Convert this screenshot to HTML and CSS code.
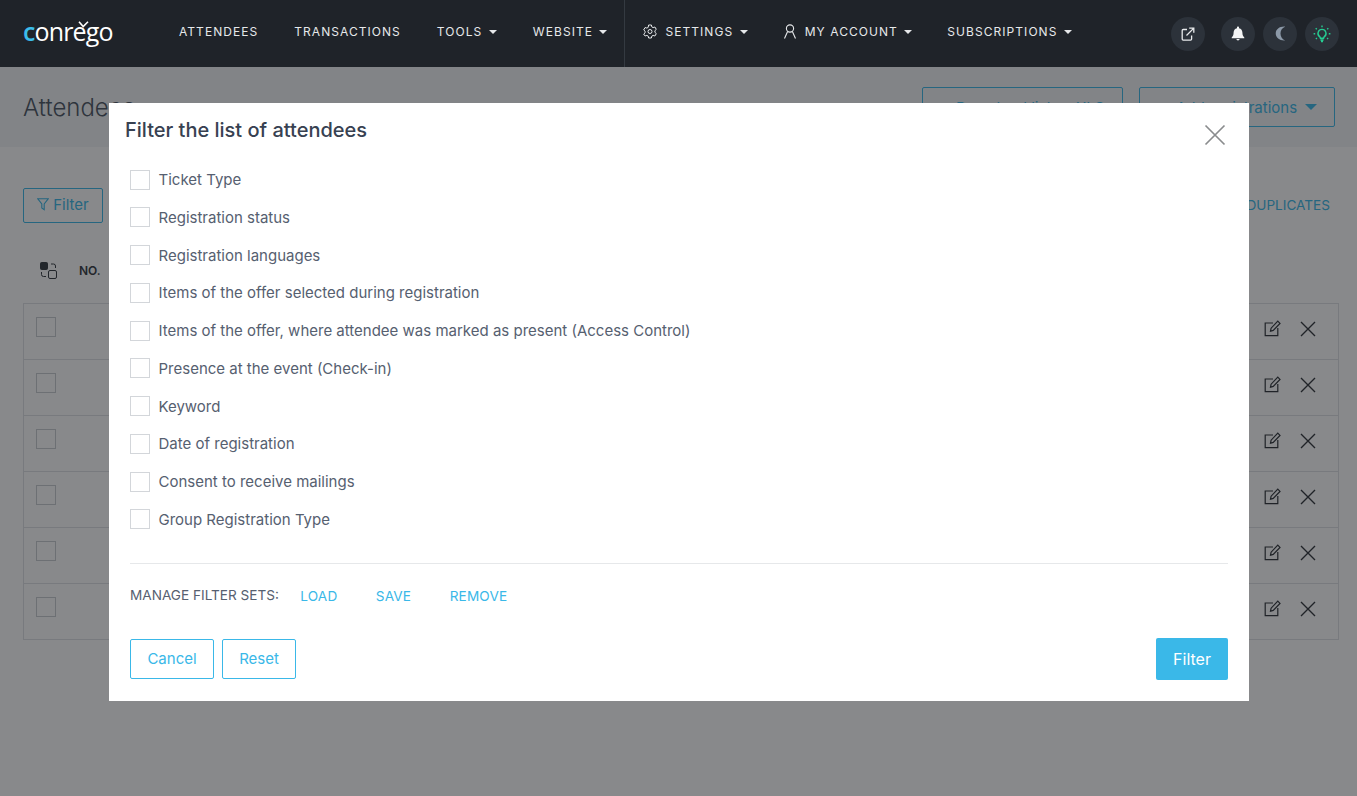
FILE: index.html
```html
<!DOCTYPE html>
<html lang="en">
<head>
<meta charset="utf-8">
<title>Attendees</title>
<link rel="stylesheet" href="styles.css">
</head>
<body>
<header class="topbar">
  <a class="logo"><span class="logo-c">c</span>onrego<svg class="logo-tick" width="11" height="7" viewBox="0 0 11 7"><path d="M1 .8l4.200 4.700L10 .8" fill="none" stroke="#fff" stroke-width="1.600"/></svg></a>
  <nav class="nav nav-main">
    <a class="nav-link">ATTENDEES</a>
    <a class="nav-link">TRANSACTIONS</a>
    <a class="nav-link caret">TOOLS</a>
    <a class="nav-link caret">WEBSITE</a>
  </nav>
  <nav class="nav nav-second">
    <a class="nav-link caret"><svg class="nav-icon" width="14" height="15" viewBox="0 0 14 15" fill="none" stroke="#e6e8ea" stroke-width="1"><circle cx="7" cy="7.500" r="2"/><path d="M5.600 1h2.800l.4 1.900 1.300.7 1.800-.6 1.400 2.400-1.400 1.300v1.600l1.400 1.300-1.400 2.400-1.800-.6-1.300.7-.4 1.900H5.600l-.4-1.900-1.300-.7-1.800.6L.7 10.100l1.400-1.300V7.200L.7 5.900l1.400-2.400 1.800.6 1.300-.7z"/></svg>SETTINGS</a>
    <a class="nav-link caret"><svg class="nav-icon" width="14" height="15" viewBox="0 0 14 15" fill="none" stroke="#e6e8ea" stroke-width="1.100"><circle cx="7" cy="4.500" r="3.600"/><path d="M4.600 7.500 1.500 14.500M9.400 7.500l3.100 7"/></svg>MY ACCOUNT</a>
    <a class="nav-link caret">SUBSCRIPTIONS</a>
  </nav>
  <div class="round-group">
    <a class="round round-ext"><svg width="14" height="14" viewBox="0 0 14 14" fill="none" stroke="#e8eaec" stroke-width="1.300"><path d="M6 2.500H2.200a1 1 0 0 0-1 1v8.600a1 1 0 0 0 1 1h7.400a1 1 0 0 0 1-1V8.500"/><path d="M5.500 8.500 12.600 1.400M8.200 1.200h4.600v4.600"/></svg></a>
    <a class="round"><svg width="14" height="15" viewBox="0 0 14 15" fill="#f4f5f6"><path d="M7 .6c.6 0 1 .4 1 1v.6c2.200.5 3.400 2.300 3.400 4.400 0 2.700.7 3.600 1.900 4.900v.7H.7v-.7c1.200-1.300 1.900-2.200 1.900-4.900 0-2.100 1.200-3.900 3.400-4.400v-.6c0-.6.4-1 1-1z"/><path d="M5.400 13h3.200a1.600 1.400 0 0 1-3.200 0z"/></svg></a>
    <a class="round"><svg width="11" height="15" viewBox="0 0 12 16"><path d="M11 .5C7.500 2 6 4.800 6 8s1.500 6 5 7.500C5.500 16 .8 12.800.8 8S5.500 0 11 .5z" fill="#8c99a8"/></svg></a>
    <a class="round"><svg width="18" height="18" viewBox="0 0 18 18" fill="none" stroke="#26cc92" stroke-width="1.400"><path d="M9 4.400a4 4 0 0 0-2.400 7.200c.5.4.7.9.8 1.600h3.200c.1-.7.3-1.200.8-1.600A4 4 0 0 0 9 4.400zM7.400 15h3.200M8 16.500h2"/><path d="M9 .6v1.600M2.700 3.200l1.100 1.100M15.300 3.200l-1.100 1.100M.6 8.800h1.600M15.800 8.800h1.600M2.900 14l1-1M15.100 14l-1-1"/></svg></a>
  </div>
</header>

<main class="page">
  <div class="page-head">
    <h1 class="page-title">Attendees</h1>
    <div class="page-actions">
      <a class="btn-outline btn-dl"><span class="plus">+</span>Download list as XLS</a>
      <a class="btn-outline btn-add"><span class="plus">+</span>Add registrations<i class="tri"></i></a>
    </div>
  </div>
  <div class="tools">
    <a class="btn-filter"><svg width="12" height="13" viewBox="0 0 12 13" fill="none" stroke="currentColor" stroke-width="1.100"><path d="M.8.8h10.400L7.200 6v5.600L4.800 10V6z"/></svg>Filter</a>
    <a class="dup-link">FIND DUPLICATES</a>
  </div>
  <div class="table-head">
    <svg width="17" height="17" viewBox="0 0 17 17" fill="none" stroke="#33383e" stroke-width="1"><rect x=".5" y=".5" width="7" height="7" rx="1" fill="#33383e"/><rect x="8.500" y="8.500" width="8" height="8" rx="1.500"/><path d="M11 2h2.500a2 2 0 0 1 2 2v2M1.500 10v2.500a2 2 0 0 0 2 2H6"/></svg>
    <span class="th-no">NO.</span>
  </div>
  <div class="table">
    <div class="row"><span class="cell-check"></span><a class="ic-edit"><svg width="17" height="17" viewBox="0 0 17 17" fill="none" stroke="#2e3338" stroke-width="1.200"><path d="M9 3H1.200v12.600h12.600V8"/><path d="M6.500 11.200l.6-3L13.800 1.200l2.200 2.200-6.800 7z"/></svg></a><a class="ic-x"><svg width="16" height="16" viewBox="0 0 16 16" stroke="#2e3338" stroke-width="1.400"><path d="M1 1l14 14M15 1 1 15"/></svg></a></div>
    <div class="row"><span class="cell-check"></span><a class="ic-edit"><svg width="17" height="17" viewBox="0 0 17 17" fill="none" stroke="#2e3338" stroke-width="1.200"><path d="M9 3H1.200v12.600h12.600V8"/><path d="M6.500 11.200l.6-3L13.800 1.200l2.200 2.200-6.800 7z"/></svg></a><a class="ic-x"><svg width="16" height="16" viewBox="0 0 16 16" stroke="#2e3338" stroke-width="1.400"><path d="M1 1l14 14M15 1 1 15"/></svg></a></div>
    <div class="row"><span class="cell-check"></span><a class="ic-edit"><svg width="17" height="17" viewBox="0 0 17 17" fill="none" stroke="#2e3338" stroke-width="1.200"><path d="M9 3H1.200v12.600h12.600V8"/><path d="M6.500 11.200l.6-3L13.800 1.200l2.200 2.200-6.800 7z"/></svg></a><a class="ic-x"><svg width="16" height="16" viewBox="0 0 16 16" stroke="#2e3338" stroke-width="1.400"><path d="M1 1l14 14M15 1 1 15"/></svg></a></div>
    <div class="row"><span class="cell-check"></span><a class="ic-edit"><svg width="17" height="17" viewBox="0 0 17 17" fill="none" stroke="#2e3338" stroke-width="1.200"><path d="M9 3H1.200v12.600h12.600V8"/><path d="M6.500 11.200l.6-3L13.800 1.200l2.200 2.200-6.800 7z"/></svg></a><a class="ic-x"><svg width="16" height="16" viewBox="0 0 16 16" stroke="#2e3338" stroke-width="1.400"><path d="M1 1l14 14M15 1 1 15"/></svg></a></div>
    <div class="row"><span class="cell-check"></span><a class="ic-edit"><svg width="17" height="17" viewBox="0 0 17 17" fill="none" stroke="#2e3338" stroke-width="1.200"><path d="M9 3H1.200v12.600h12.600V8"/><path d="M6.500 11.200l.6-3L13.800 1.200l2.200 2.200-6.800 7z"/></svg></a><a class="ic-x"><svg width="16" height="16" viewBox="0 0 16 16" stroke="#2e3338" stroke-width="1.400"><path d="M1 1l14 14M15 1 1 15"/></svg></a></div>
    <div class="row"><span class="cell-check"></span><a class="ic-edit"><svg width="17" height="17" viewBox="0 0 17 17" fill="none" stroke="#2e3338" stroke-width="1.200"><path d="M9 3H1.200v12.600h12.600V8"/><path d="M6.500 11.200l.6-3L13.800 1.200l2.200 2.200-6.800 7z"/></svg></a><a class="ic-x"><svg width="16" height="16" viewBox="0 0 16 16" stroke="#2e3338" stroke-width="1.400"><path d="M1 1l14 14M15 1 1 15"/></svg></a></div>
  </div>
</main>

<div class="backdrop"></div>

<section class="modal">
  <div class="modal-head">
    <h2 class="modal-title">Filter the list of attendees</h2>
    <a class="modal-close"><svg width="22" height="22" viewBox="0 0 22 22" stroke="#8a8c8e" stroke-width="1.700"><path d="M1.500 1.500l19 19M20.500 1.500l-19 19"/></svg></a>
  </div>
  <div class="filters">
    <label class="filter-row"><span class="box"></span>Ticket Type</label>
    <label class="filter-row"><span class="box"></span>Registration status</label>
    <label class="filter-row"><span class="box"></span>Registration languages</label>
    <label class="filter-row"><span class="box"></span>Items of the offer selected during registration</label>
    <label class="filter-row"><span class="box"></span>Items of the offer, where attendee was marked as present (Access Control)</label>
    <label class="filter-row"><span class="box"></span>Presence at the event (Check-in)</label>
    <label class="filter-row"><span class="box"></span>Keyword</label>
    <label class="filter-row"><span class="box"></span>Date of registration</label>
    <label class="filter-row"><span class="box"></span>Consent to receive mailings</label>
    <label class="filter-row"><span class="box"></span>Group Registration Type</label>
  </div>
  <div class="sets">
    <span class="sets-label">MANAGE FILTER SETS:</span>
    <a class="sets-link">LOAD</a>
    <a class="sets-link">SAVE</a>
    <a class="sets-link">REMOVE</a>
  </div>
  <div class="modal-foot">
    <a class="btn-line btn-cancel">Cancel</a>
    <a class="btn-line btn-reset">Reset</a>
    <a class="btn-solid">Filter</a>
  </div>
</section>
</body>
</html>
```
FILE: styles.css
```css
* { box-sizing: border-box; }
html, body { margin: 0; height: 100%; overflow: hidden; }
body { font-family: Inter, "Liberation Sans", sans-serif; background: #fff; color: #4b5563; }
a { color: inherit; text-decoration: none; }
h1, h2 { margin: 0; }

.topbar { position: relative; z-index: 20; height: 67px; background: #1f2329; display: flex; align-items: center; padding-left: 23px; }
.logo { position: relative; width: 91px; font-family: "Open Sans", sans-serif; font-size: 25px; font-weight: 500; line-height: 30px; letter-spacing: -0.85px; color: #fff; margin-right: 65px; top: -3px; }
.logo-c { color: #3bbcea; font-weight: 600; }
.logo-tick { position: absolute; left: 55px; top: 5px; }
.nav { display: flex; height: 67px; align-items: center; padding-bottom: 4px; }
.nav-link { display: flex; align-items: center; font-size: 12px; font-weight: 400; letter-spacing: 1.05px; color: #e6e8ea; white-space: nowrap; }
.nav-main { gap: 36px; padding-right: 17px; border-right: 1px solid #343a41; }
.nav-second { gap: 35px; padding-left: 18px; }
.nav-icon { margin-right: 8px; }
.caret::after { content: ""; margin-left: 6.5px; border-left: 4px solid transparent; border-right: 4px solid transparent; border-top: 4px solid #e6e8ea; }
.round-group { margin-left: auto; padding-right: 18px; display: flex; gap: 8px; }
.round { width: 34px; height: 34px; border-radius: 50%; background: #2c323a; display: flex; align-items: center; justify-content: center; }
.round-ext { margin-right: 8px; }

.page { background: #fff; }
.page-head { height: 80px; background: #f3f5f7; display: flex; align-items: center; justify-content: space-between; padding: 0 22px 0 23px; }
.page-title { font-size: 24px; font-weight: 300; color: #4b5563; }
.page-actions { display: flex; gap: 16px; }
.btn-outline { height: 40px; border: 1px solid #3ab8e8; border-radius: 2px; color: #3ab8e8; font-size: 15px; display: flex; align-items: center; white-space: nowrap; }
.btn-dl { width: 201px; padding-left: 17px; }
.btn-add { width: 196px; padding-left: 20px; }
.plus { margin-right: 6px; }
.tri { margin-left: 8px; border-left: 6px solid transparent; border-right: 6px solid transparent; border-top: 6px solid #3ab8e8; }
.tools { display: flex; justify-content: space-between; align-items: center; padding: 41px 27px 0 23px; }
.btn-filter { width: 80px; height: 35px; border: 1px solid #3ab8e8; border-radius: 2px; color: #3ab8e8; font-size: 15px; display: flex; align-items: center; justify-content: center; gap: 4px; padding-bottom: 2px; }
.dup-link { color: #3ab8e8; font-size: 13.6px; position: relative; top: -1px; }
.table-head { display: flex; align-items: center; height: 80px; padding: 14px 0 0 40px; }
.th-no { margin-left: 22px; font-size: 12px; font-weight: 600; color: #33383e; }
.table { margin: 0 18px 0 23px; border: 1px solid #dfe1e4; border-bottom: 0; }
.row { height: 56px; border-bottom: 1px solid #dfe1e4; display: flex; align-items: center; padding: 0 22px 6px 12px; }
.cell-check { width: 20px; height: 20px; border: 1px solid #c9ccd0; margin-right: auto; position: relative; top: -2px; }
.ic-edit { display: flex; margin-right: 19px; }
.ic-edit svg, .ic-x svg { display: block; }

.backdrop { position: fixed; inset: 0; z-index: 10; background: rgba(17, 20, 24, 0.5); }

.modal { position: fixed; z-index: 30; left: 109px; top: 103px; width: 1140px; height: 598px; background: #fff; padding: 0 21px; }
.modal-head { position: relative; height: 58px; margin: 0 0 0 -5px; }
.modal-title { padding-top: 15px; font-size: 20px; line-height: 24px; font-weight: 500; color: #374151; }
.modal-close { position: absolute; right: 2px; top: 21px; display: flex; }
.filters { display: flex; flex-direction: column; gap: 17.75px; padding-bottom: 33.3px; border-bottom: 1px solid #e6e8ea; margin-top: 8.7px; }
.filter-row { display: flex; align-items: center; height: 20px; font-size: 15px; color: #566070; }
.box { width: 20px; height: 20px; border: 1px solid #d3d6da; margin-right: 8.5px; flex: none; }
.sets { display: flex; align-items: center; height: 20px; margin-top: 21px; font-size: 13.6px; }
.sets-label { color: #566070; margin-right: 21.5px; }
.sets-link { color: #3ab8e8; margin-right: 38.5px; letter-spacing: 0.15px; position: relative; top: 1px; }
.modal-foot { display: flex; align-items: center; margin-top: 33px; gap: 8px; }
.btn-line { height: 40px; display: flex; align-items: center; justify-content: center; border: 1px solid #3ab8e8; border-radius: 2px; color: #3ab8e8; font-size: 15px; }
.btn-cancel { width: 84px; }
.btn-reset { width: 74px; }
.btn-solid { margin-left: auto; width: 72px; height: 42px; background: #3ab8e8; color: #fff; border-radius: 2px; font-size: 16px; display: flex; align-items: center; justify-content: center; }
```
